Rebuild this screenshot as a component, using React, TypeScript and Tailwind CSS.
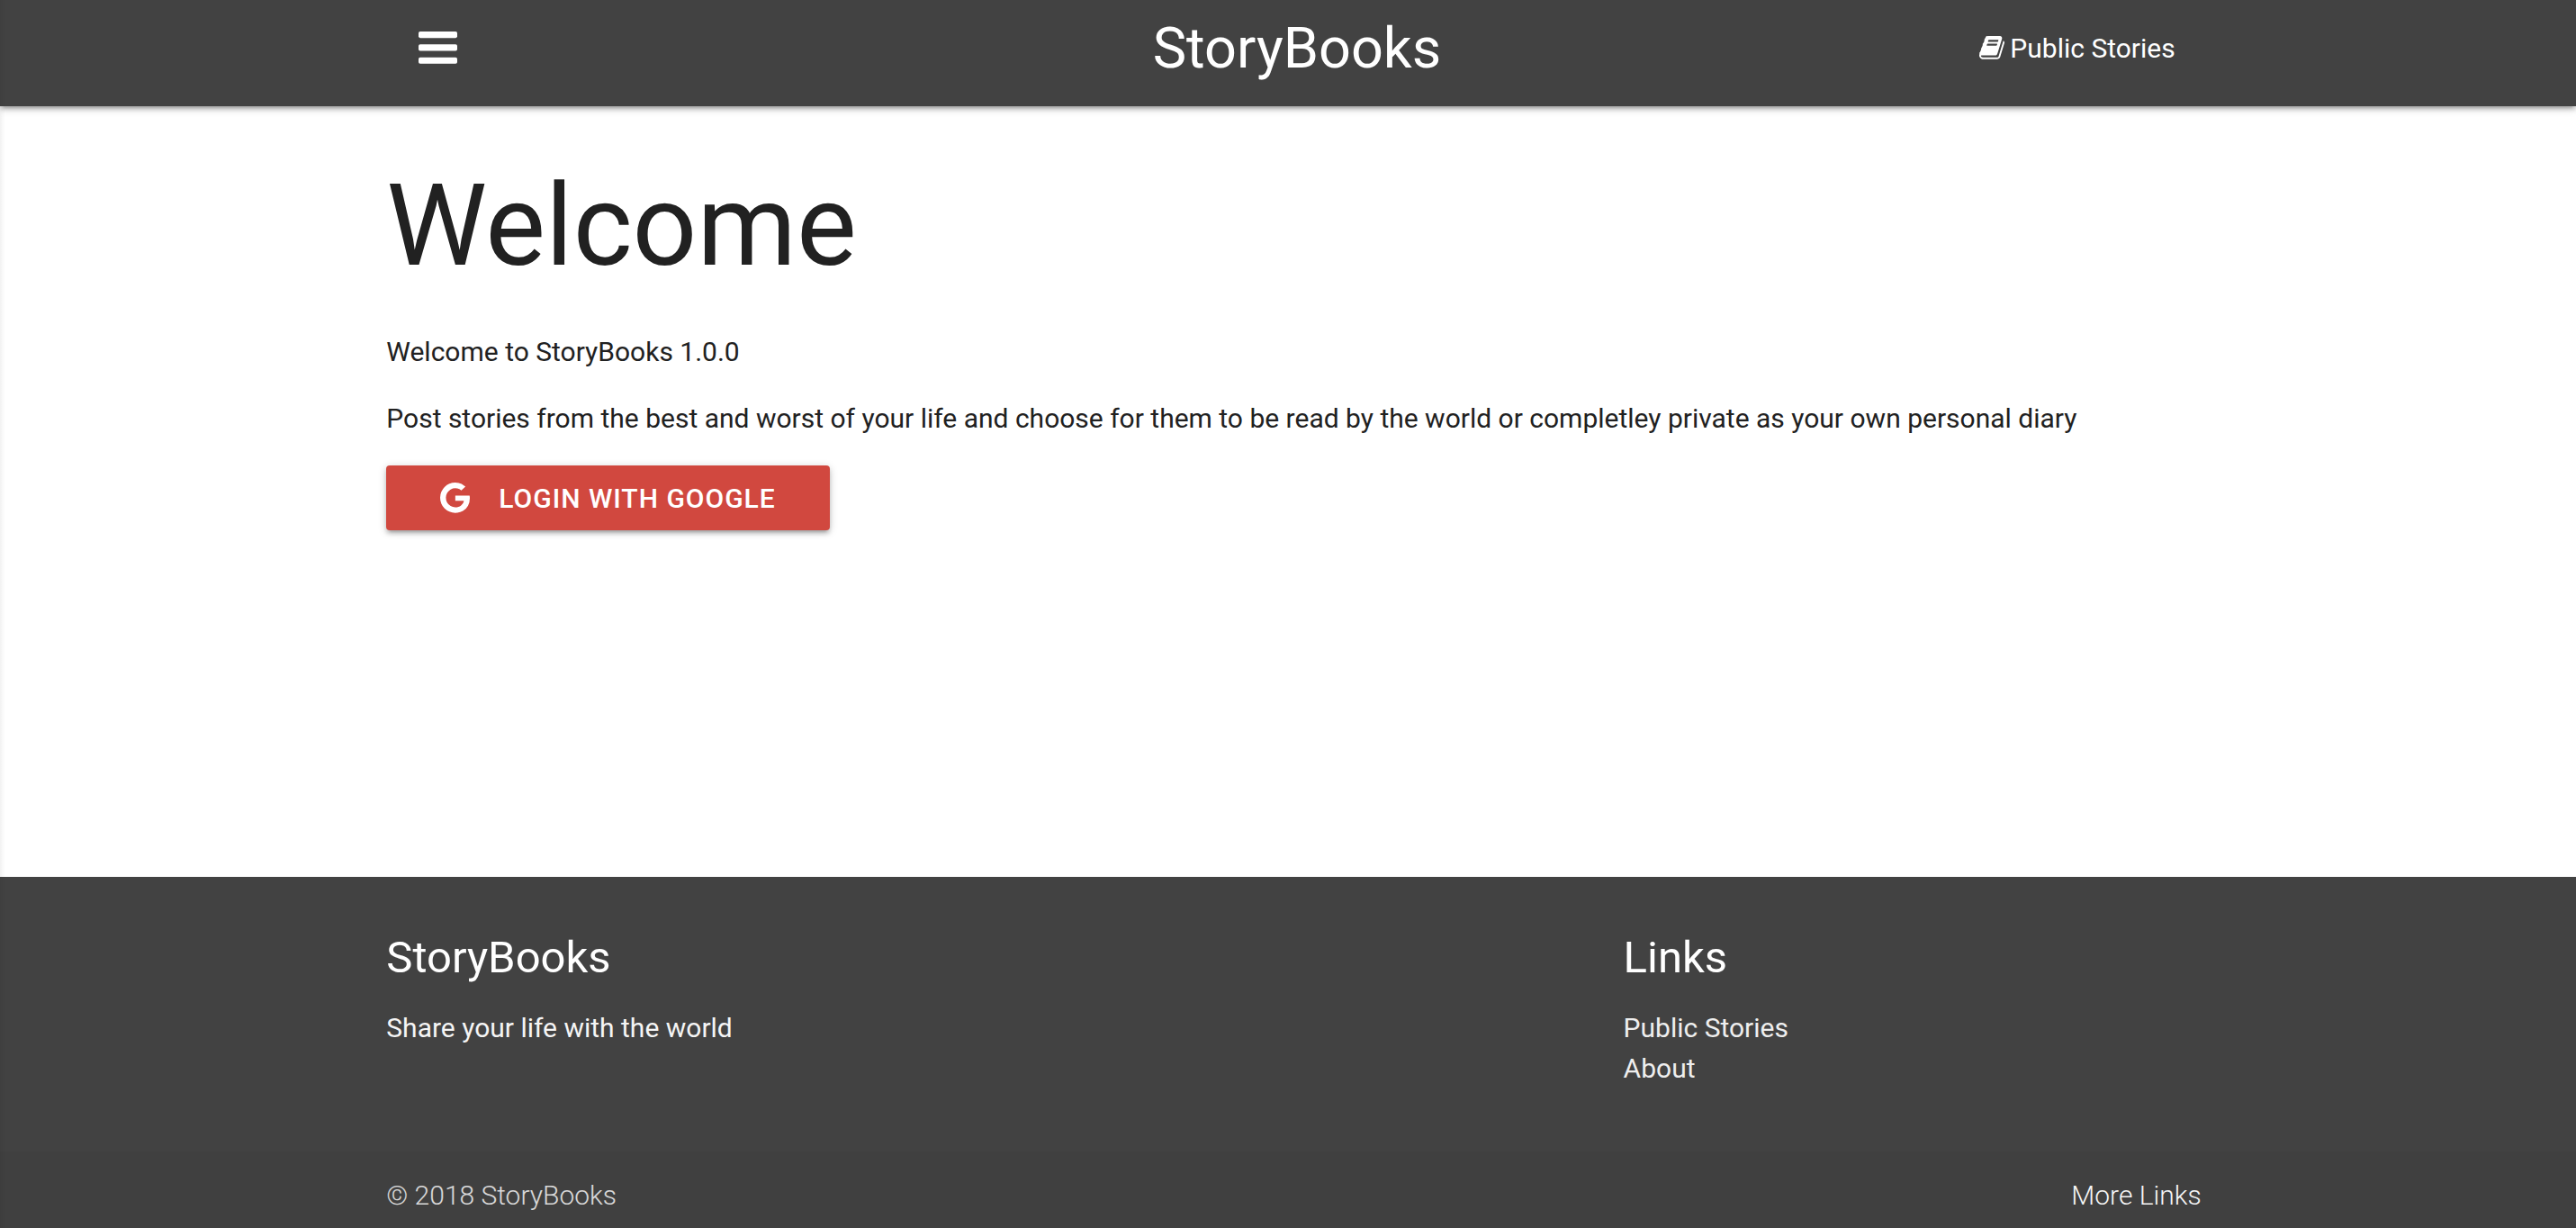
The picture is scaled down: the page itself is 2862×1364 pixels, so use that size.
import type { ReactNode } from "react";

const BOOK =
  "M1639 478q40 57 18 129l-275 906q-19 64-76.5 107.5t-122.5 43.5h-923q-77 0-148.5-53.5t-99.5-131.5q-24-67-2-127 0-4 3-27t4-37q1-8-3-21.5t-3-19.5q2-11 8-21t16.5-23.5 16.5-23.5q23-38 45-91.5t30-91.5q3-10 .5-30t-.5-28q3-11 17-28t17-23q21-36 42-92t25-90q1-9-2.5-32t.5-28q4-13 22-30.5t22-22.5q19-26 42.5-84.5t27.5-96.5q1-8-3-25.5t-2-26.5q2-8 9-18t18-23 17-21q8-12 16.5-30.5t15-35 16-36 19.5-32 26.5-23.5 36-11.5 47.5 5.5l-1 3q38-9 51-9h761q74 0 114 56t18 130l-274 906q-36 119-71.5 153.5t-128.5 34.5h-869q-27 0-38 15-11 16-1 43 24 70 144 70h923q29 0 56-15.5t35-41.5l300-987q7-22 5-57 38 15 59 43zm-1064 2q-4 13 2 22.5t20 9.5h608q13 0 25.5-9.5t16.5-22.5l21-64q4-13-2-22.5t-20-9.5h-608q-13 0-25.5 9.5t-16.5 22.5zm-83 256q-4 13 2 22.5t20 9.5h608q13 0 25.5-9.5t16.5-22.5l21-64q4-13-2-22.5t-20-9.5h-608q-13 0-25.5 9.5t-16.5 22.5z";

const GOOGLE =
  "M896 786h725q12 67 12 128 0 217-91 387.5t-259.5 266.5-386.5 96q-157 0-299-60.5t-245-163.5-163.5-245-60.5-299 60.5-299 163.5-245 245-163.5 299-60.5q300 0 515 201l-209 201q-123-119-306-119-129 0-238.5 65t-173.5 176.5-64 243.5 64 243.5 173.5 176.5 238.5 65q87 0 160-24t120-60 82-82 51.5-87 22.5-78h-436v-264z";

function Container({ className, children }: { className: string; children: ReactNode }) {
  return <div className={`mx-auto w-[70%] ${className}`}>{children}</div>;
}

function Header() {
  return (
    <header className="relative bg-[#424242] pb-3 text-white shadow-[0_4px_4px_0_rgba(0,0,0,0.14),0_6px_2px_-4px_rgba(0,0,0,0.12),0_2px_10px_0_rgba(0,0,0,0.2)]">
      <Container className="grid h-[106px] grid-cols-[1fr_auto_1fr] items-center pr-4 pl-9">
        <button type="button" aria-label="Open menu" className="justify-self-start">
          <svg viewBox="0 0 1536 1280" className="w-[43px]" fill="currentColor" aria-hidden="true">
            <rect y="0" width="1536" height="256" rx="64" />
            <rect y="512" width="1536" height="256" rx="64" />
            <rect y="1024" width="1536" height="256" rx="64" />
          </svg>
        </button>
        <a href="#home" className="text-[63px] leading-none">
          StoryBooks
        </a>
        <a href="#stories" className="flex items-center gap-1.5 justify-self-end">
          <svg viewBox="0 0 1664 1536" className="w-[28px]" fill="currentColor" aria-hidden="true">
            <path transform="translate(0 -128)" d={BOOK} />
          </svg>
          Public Stories
        </a>
      </Container>
    </header>
  );
}

function Footer() {
  return (
    <footer className="bg-[#424242] text-white">
      <Container className="flex h-[305px] pt-[63px]">
        <section className="w-[68.6%]">
          <h5 className="text-[49px] leading-[54px]">StoryBooks</h5>
          <p className="mt-7 text-[#f5f5f5]">Share your life with the world</p>
        </section>
        <section>
          <h5 className="text-[49px] leading-[54px]">Links</h5>
          <ul className="mt-7 text-[#eeeeee]">
            <li>
              <a href="#stories">Public Stories</a>
            </li>
            <li>
              <a href="#about">About</a>
            </li>
          </ul>
        </section>
      </Container>
      <div className="bg-[#333333]/8 font-light">
        <Container className="flex h-[85px] items-end justify-between pb-[14px]">
          <span className="text-white/80">© 2018 StoryBooks</span>
          <a href="#more" className="mr-[-13px] text-[#f5f5f5]">
            More Links
          </a>
        </Container>
      </div>
    </footer>
  );
}

export default function App() {
  return (
    <div className="relative flex min-h-screen flex-col bg-white font-[Roboto,sans-serif] text-[30px] leading-[45px] text-[#212121]">
      <Header />
      <main className="flex-1">
        <Container className="pt-16">
          <h1 className="text-[126px] leading-[138px]">Welcome</h1>
          <p className="mt-12">Welcome to StoryBooks 1.0.0</p>
          <p className="mt-[29px]">
            Post stories from the best and worst of your life and choose for them to be read by the
            world or completley private as your own personal diary
          </p>
          <button
            type="button"
            className="mt-[30px] flex h-[72px] items-center gap-8 rounded-[4px] bg-[#d1483f] px-[60px] font-medium tracking-[1px] text-white uppercase shadow-[0_4px_4px_0_rgba(0,0,0,0.14),0_6px_2px_-4px_rgba(0,0,0,0.12),0_2px_10px_0_rgba(0,0,0,0.2)]"
          >
            <svg viewBox="128 128 1505 1536" className="w-[33px]" fill="currentColor" aria-hidden="true">
              <path d={GOOGLE} />
            </svg>
            Login with Google
          </button>
        </Container>
      </main>
      <Footer />
      <div className="pointer-events-none absolute inset-y-0 left-0 w-1.5 bg-linear-to-r from-black/5 to-transparent" />
    </div>
  );
}
